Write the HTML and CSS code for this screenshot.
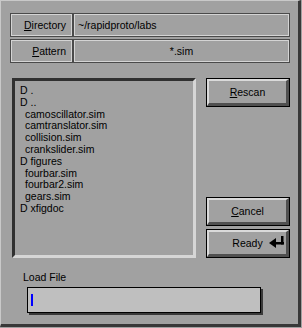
FILE: index.html
```html
<!DOCTYPE html>
<html lang="en">
<head>
  <meta charset="UTF-8">
  <link rel="stylesheet" href="styles.css">
  <title>Load File</title>
</head>
<body>
  <div class="window">
    <div class="field-row">
      <div class="field-label"><u>D</u>irectory</div>
      <div class="field-value">~/rapidproto/labs</div>
    </div>
    <div class="field-row">
      <div class="field-label"><u>P</u>attern</div>
      <div class="field-value center">*.sim</div>
    </div>

    <div class="main">
      <div class="file-list">
        <div class="entry dir">D .</div>
        <div class="entry dir">D ..</div>
        <div class="entry file">camoscillator.sim</div>
        <div class="entry file">camtranslator.sim</div>
        <div class="entry file">collision.sim</div>
        <div class="entry file">crankslider.sim</div>
        <div class="entry dir">D figures</div>
        <div class="entry file">fourbar.sim</div>
        <div class="entry file">fourbar2.sim</div>
        <div class="entry file">gears.sim</div>
        <div class="entry dir">D xfigdoc</div>
      </div>
      <div class="buttons">
        <button class="btn"><u>R</u>escan</button>
        <div class="btn-group">
          <button class="btn"><u>C</u>ancel</button>
          <button class="btn btn-ready">
            <span></span>
            <span>Ready</span>
            <svg class="enter-icon" width="15" height="13" viewBox="0 0 15 13">
              <polygon points="0,7 7,2 7,12" fill="#000"/>
              <rect x="6" y="6" width="9" height="2.5" fill="#000"/>
              <rect x="12" y="0" width="2.5" height="8.5" fill="#000"/>
            </svg>
          </button>
        </div>
      </div>
    </div>

    <div class="load-label">Load File</div>
    <div class="load-input"><span class="caret"></span></div>
  </div>
</body>
</html>
```

FILE: styles.css
```css
body {
  margin: 0;
  background-color: #a1a1a1;
  font-family: "Liberation Sans", Arial, sans-serif;
  font-size: 10.5px;
  color: #000;
}

.window {
  width: 301px;
  height: 327px;
  box-sizing: border-box;
  background-color: #a1a1a1;
  border-top: 1px solid #c9c9c9;
  border-left: 1px solid #c9c9c9;
  border-right: 3px solid #383838;
  border-bottom: 3px solid #383838;
  padding: 12px 8px 0 9px;
  display: flex;
  flex-direction: column;
}

.field-row {
  display: grid;
  grid-template-columns: 63px 217px;
  height: 24px;
  margin-bottom: 2px;
}

.field-label,
.field-value {
  border: 1px solid #4a4a4a;
  box-shadow: inset 1px 1px 0 #d4d4d4, inset -1px -1px 0 #d4d4d4;
  display: flex;
  align-items: center;
}

.field-label {
  justify-content: flex-end;
  padding-right: 6px;
}

.field-value {
  padding-left: 4px;
}

.field-value.center {
  justify-content: center;
  padding-left: 0;
}

.main {
  display: flex;
  margin-top: 13px;
  height: 180px;
}

.file-list {
  width: 184px;
  margin-left: 2px;
  box-sizing: border-box;
  border-style: solid;
  border-width: 3px;
  border-color: #303030 #d6d6d6 #d6d6d6 #303030;
  padding: 4px 0 0 5px;
}

.entry {
  line-height: 11.8px;
  white-space: pre;
}

.entry.file {
  padding-left: 5px;
}

.buttons {
  margin-left: auto;
  margin-right: 1px;
  width: 82px;
  display: flex;
  flex-direction: column;
  justify-content: space-between;
}

.btn-group {
  display: flex;
  flex-direction: column;
  gap: 3px;
}

.btn {
  height: 27px;
  margin: 0;
  padding: 0;
  box-sizing: border-box;
  font-family: inherit;
  font-size: 10.5px;
  color: #000;
  background-color: #a1a1a1;
  border-style: solid;
  border-width: 2px 3px 3px 2px;
  border-color: #dadada #505050 #505050 #dadada;
  box-shadow: 0 0 0 1px #000;
  margin: 1px 0;
}

.btn-ready {
  display: grid;
  grid-template-columns: 1fr auto 1fr;
  align-items: center;
}

.enter-icon {
  justify-self: end;
  margin-right: 2px;
  margin-top: -1px;
}

.load-label {
  margin-top: 13px;
  padding-left: 13px;
  line-height: 12px;
}

.load-input {
  margin-top: 4px;
  margin-left: 17px;
  width: 234px;
  height: 26px;
  box-sizing: border-box;
  background-color: #bfbfbf;
  border: 1px solid #000;
  box-shadow: 2px 2px 0 #3a3a3a;
  display: flex;
  align-items: center;
  padding-left: 3px;
}

.caret {
  width: 2px;
  height: 12px;
  background-color: #0000ff;
}
```
